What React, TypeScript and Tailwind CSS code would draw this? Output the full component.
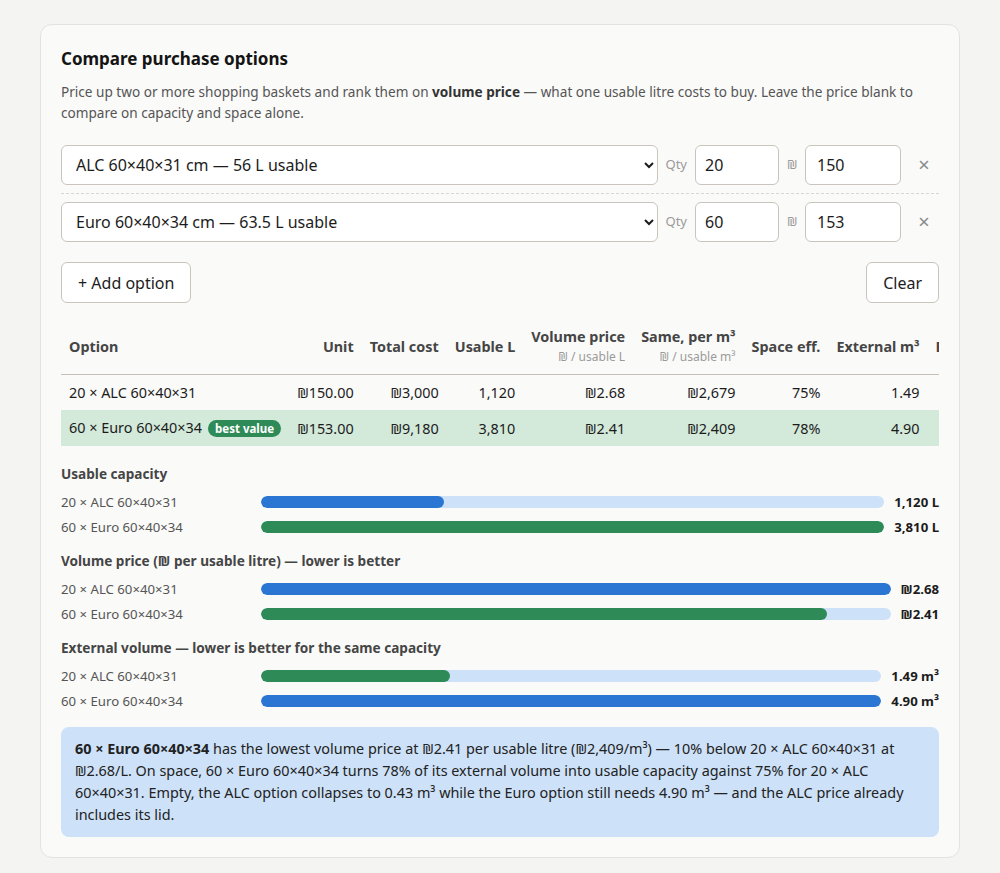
import { ReactNode } from "react";

type Basket = { id: number; label: string; qty: string; price: string };

const baskets: Basket[] = [
  { id: 1, label: "ALC 60×40×31 cm — 56 L usable", qty: "20", price: "150" },
  { id: 2, label: "Euro 60×40×34 cm — 63.5 L usable", qty: "60", price: "153" },
];

const rows = [
  {
    name: "20 × ALC 60×40×31",
    best: false,
    cells: ["₪150.00", "₪3,000", "1,120", "₪2.68", "₪2,679", "75%", "1.49", "0.43"],
  },
  {
    name: "60 × Euro 60×40×34",
    best: true,
    cells: ["₪153.00", "₪9,180", "3,810", "₪2.41", "₪2,409", "78%", "4.90", "4.90"],
  },
];

const charts = [
  {
    title: "Usable capacity",
    bars: [
      { label: "20 × ALC 60×40×31", pct: 29.4, good: false, value: "1,120 L" },
      { label: "60 × Euro 60×40×34", pct: 100, good: true, value: "3,810 L" },
    ],
  },
  {
    title: "Volume price (₪ per usable litre) — lower is better",
    bars: [
      { label: "20 × ALC 60×40×31", pct: 100, good: false, value: "₪2.68" },
      { label: "60 × Euro 60×40×34", pct: 89.9, good: true, value: "₪2.41" },
    ],
  },
  {
    title: "External volume — lower is better for the same capacity",
    bars: [
      { label: "20 × ALC 60×40×31", pct: 30.4, good: true, value: "1.49 m³" },
      { label: "60 × Euro 60×40×34", pct: 100, good: false, value: "4.90 m³" },
    ],
  },
];

function Th({ children, sub, left }: { children: ReactNode; sub?: string; left?: boolean }) {
  return (
    <th className={`px-2 py-2 font-bold text-[#454545] ${left ? "text-left" : "text-right"}`}>
      <div className="leading-5">{children}</div>
      {sub && <div className="mt-px text-xs font-normal leading-[18px] text-[#9a9a9a]">{sub}</div>}
    </th>
  );
}

export default function App() {
  return (
    <div className="min-h-screen bg-[#f4f4f2] pt-6 pb-4 font-['Noto_Sans',sans-serif] text-[#1c1c1c]">
      <div className="mx-auto w-[920px] rounded-xl border border-[#e4e2de] bg-[#fafaf9] px-5 pt-5 pb-5">
        <h2 className="text-[17px] leading-7 font-bold text-[#141414]">Compare purchase options</h2>
        <p className="mt-2 text-[13.6px] leading-[21px] text-[#555]">
          Price up two or more shopping baskets and rank them on{" "}
          <b className="text-[#333]">volume price</b> — what one usable litre costs to buy. Leave the price blank to
          compare on capacity and space alone.
        </p>

        <div className="mt-[14px]">
          {baskets.map((b, i) => (
            <div
              key={b.id}
              className={`flex items-center gap-2 py-2 ${i < baskets.length - 1 ? "border-b border-dashed border-[#d9d6d0]" : ""}`}
            >
              <select
                defaultValue={b.label}
                className="h-10 flex-1 rounded-md border border-[#c9c5bd] bg-white px-[10px] text-base text-[#1c1c1c]"
              >
                <option>ALC 60×40×31 cm — 56 L usable</option>
                <option>Euro 60×40×34 cm — 63.5 L usable</option>
              </select>
              <span className="text-[13px] text-[#9a9a9a]">Qty</span>
              <input
                defaultValue={b.qty}
                className="h-10 w-[84px] rounded-md border border-[#c9c5bd] bg-white px-[9px] text-base"
              />
              <span className="w-[10px] text-[13px] text-[#9a9a9a]">₪</span>
              <input
                defaultValue={b.price}
                className="h-10 w-[96px] rounded-md border border-[#c9c5bd] bg-white px-[11px] text-base"
              />
              <button className="w-[30px] text-center text-xl leading-none text-[#8a8a8a]">×</button>
            </div>
          ))}
        </div>

        <div className="mt-3 flex items-center justify-between">
          <button className="h-[41px] rounded-md border border-[#c9c5bd] bg-white px-4 text-base">+ Add option</button>
          <button className="h-[41px] rounded-md border border-[#c9c5bd] bg-white px-4 text-base">Clear</button>
        </div>

        <div className="mt-4 overflow-x-auto [scrollbar-width:none]">
          <table className="w-full border-collapse text-[14.4px] whitespace-nowrap">
            <thead>
              <tr className="border-b border-[#c4c0b8]">
                <Th left>Option</Th>
                <Th>Unit</Th>
                <Th>Total cost</Th>
                <Th>Usable L</Th>
                <Th sub="₪ / usable L">Volume price</Th>
                <Th sub="₪ / usable m³">Same, per m³</Th>
                <Th>Space eff.</Th>
                <Th>External m³</Th>
                <Th>Empty m³</Th>
              </tr>
            </thead>
            <tbody>
              {rows.map((r) => (
                <tr key={r.name} className={r.best ? "bg-[#d3e9da]" : ""}>
                  <td className="px-2 py-[7px] leading-[21px]">
                    {r.name}
                    {r.best && (
                      <span className="ml-1.5 rounded-full bg-[#2e8b57] px-[7px] py-px text-[11.5px] font-bold text-white">
                        best value
                      </span>
                    )}
                  </td>
                  {r.cells.map((c, j) => (
                    <td key={j} className="px-2 py-[7px] text-right leading-[21px]">
                      {c}
                    </td>
                  ))}
                </tr>
              ))}
            </tbody>
          </table>
        </div>

        <div className="mt-[18px] space-y-[14px]">
          {charts.map((ch) => (
            <div key={ch.title}>
              <h3 className="text-[13.6px] leading-5 font-bold text-[#454545]">{ch.title}</h3>
              <div className="mt-2 grid grid-cols-[190px_1fr_auto] items-center gap-x-[10px] gap-y-[5px]">
                {ch.bars.map((bar) => (
                  <div key={bar.label} className="contents">
                    <span className="text-[13.2px] leading-5 text-[#555]">{bar.label}</span>
                    <div className="h-3 overflow-hidden rounded-full bg-[#cde1f8]">
                      <div
                        className={`h-full rounded-full ${bar.good ? "bg-[#2e8b57]" : "bg-[#2b76d3]"}`}
                        style={{ width: `${bar.pct}%` }}
                      />
                    </div>
                    <span className="text-right text-[13.2px] leading-5 font-bold text-[#1c1c1c]">{bar.value}</span>
                  </div>
                ))}
              </div>
            </div>
          ))}
        </div>

        <div className="mt-4 rounded-lg bg-[#cde1f8] px-[14px] py-[11px] text-[14.4px] leading-[22px] text-[#222]">
          <b>60 × Euro 60×40×34</b> has the lowest volume price at ₪2.41 per usable litre (₪2,409/m³) — 10% below 20 ×
          ALC 60×40×31 at ₪2.68/L. On space, 60 × Euro 60×40×34 turns 78% of its external volume into usable capacity
          against 75% for 20 × ALC 60×40×31. Empty, the ALC option collapses to 0.43 m³ while the Euro option still
          needs 4.90 m³ — and the ALC price already includes its lid.
        </div>
      </div>
    </div>
  );
}
